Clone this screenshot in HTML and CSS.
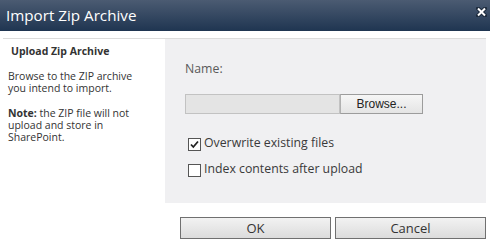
FILE: index.html
```html
<!DOCTYPE html>
<html lang="en">
<head>
  <meta charset="UTF-8">
  <title>Import Zip Archive</title>
  <link rel="stylesheet" href="styles.css">
</head>
<body>

<div class="dialog">
  <div class="titlebar">
    <span class="title">Import Zip Archive</span>
    <svg class="close" width="11" height="10" viewBox="0 0 11 10">
      <path d="M2 1.5 L9 8.5 M9 1.5 L2 8.5" stroke="#1c2a3c" stroke-width="4" stroke-linecap="square"/>
      <path d="M2 1.5 L9 8.5 M9 1.5 L2 8.5" stroke="#fff" stroke-width="2"/>
    </svg>
  </div>

  <div class="rule"></div>

  <div class="main">
    <div class="side">
      <h3>Upload Zip Archive</h3>
      <p>Browse to the ZIP archive you intend to import.</p>
      <p><b>Note:</b> the ZIP file will not upload and store in SharePoint.</p>
    </div>
    <div class="panel">
      <label class="field-label">Name:</label>
      <div class="file-row">
        <div class="file-input"></div>
        <div class="browse">Browse...</div>
      </div>
      <div class="check-row">
        <span class="box checked">
          <svg width="11" height="11" viewBox="0 0 11 11"><path d="M2 5.5 L4.3 8 L9 2.5" fill="none" stroke="#222" stroke-width="1.8"/></svg>
        </span>
        <span class="check-text">Overwrite existing files</span>
      </div>
      <div class="check-row">
        <span class="box"></span>
        <span class="check-text">Index contents after upload</span>
      </div>
    </div>
  </div>

  <div class="actions">
    <div class="btn">OK</div>
    <div class="btn">Cancel</div>
  </div>
</div>

</body>
</html>
```

FILE: styles.css
```css
body {
  margin: 0;
  padding: 0;
  background-color: #fff;
  font-family: 'Open Sans', 'Noto Sans', sans-serif;
  color: #444;
}
.dialog {
  width: 490px;
  height: 246px;
  overflow: hidden;
}
.titlebar {
  height: 31px;
  display: flex;
  align-items: center;
  justify-content: space-between;
  padding: 0 3px 0 6px;
  background: linear-gradient(#4b5b72, #1f3551);
}
.title {
  color: #fff;
  font-size: 15.2px;
  margin-top: -1px;
}
.close {
  margin-top: -8px;
}
.rule {
  height: 1px;
  margin: 7px 4px 0 3px;
  background-color: #dcdcdc;
}
.main {
  display: flex;
  height: 164px;
}
.side {
  width: 135px;
  padding: 6px 22px 0 8px;
  font-size: 10.5px;
  line-height: 12px;
  color: #333;
}
.side h3 {
  margin: 0 0 13px 3px;
  font-size: 10.5px;
  font-weight: 700;
}
.side p {
  margin: 0 0 13px 0;
}
.side b {
  display: inline-block;
  line-height: 9px;
}
.panel {
  width: 301px;
  padding: 22px 0 0 20px;
  background-color: #f0f0f2;
  font-size: 12.3px;
  color: #444;
}
.field-label {
  display: block;
  line-height: 16px;
  margin-bottom: 17px;
  color: #5a5a5a;
}
.file-row {
  display: flex;
  height: 20px;
}
.file-input {
  width: 153px;
  border: 1px solid #c2c2c2;
  background-color: #e4e4e4;
}
.browse {
  width: 81px;
  border: 1px solid #9c9c9c;
  border-left: 1px solid #b0b0b0;
  background: linear-gradient(#f6f6f6, #e4e4e4);
  font-family: 'Liberation Sans', Arial, sans-serif;
  font-size: 12px;
  color: #222;
  display: flex;
  align-items: center;
  justify-content: center;
}
.check-row {
  display: flex;
  align-items: flex-start;
  gap: 3px;
  margin-left: 3px;
  height: 13px;
  color: #3a3a3a;
}
.check-text {
  line-height: 13px;
  margin-top: -2px;
}
.file-row + .check-row {
  margin-top: 24px;
}
.check-row + .check-row {
  margin-top: 13px;
}
.box {
  width: 11px;
  height: 11px;
  border: 1px solid #555;
  background-color: #fff;
  display: flex;
}
.actions {
  display: flex;
  justify-content: flex-end;
  gap: 4px;
  padding: 14px 4px 0 0;
}
.btn {
  width: 149px;
  height: 20px;
  border: 1px solid #707070;
  background: linear-gradient(#f2f2f2, #dcdcdc);
  font-size: 13px;
  color: #333;
  display: flex;
  align-items: center;
  justify-content: center;
}
```
